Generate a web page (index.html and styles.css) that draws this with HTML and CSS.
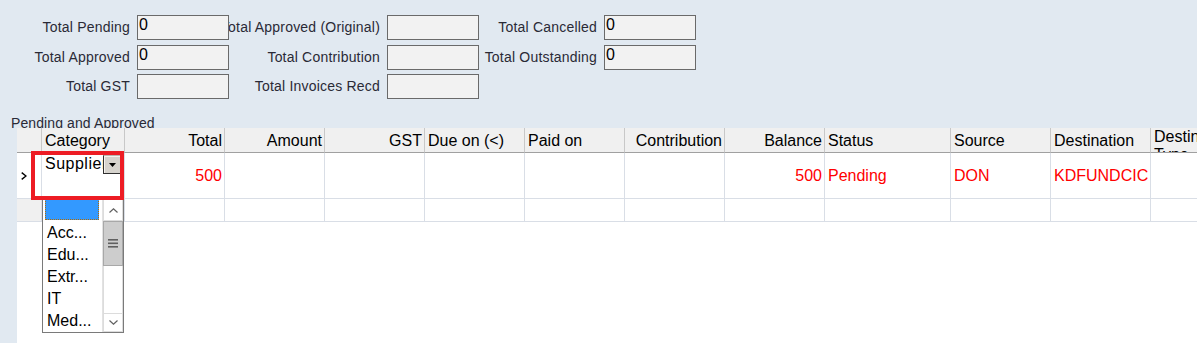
FILE: index.html
```html
<!DOCTYPE html>
<html>
<head>
<meta charset="utf-8">
<link rel="stylesheet" href="styles.css">
</head>
<body>
<div class="page">
  <div class="summary">
    <div class="lbl"><span>Total Pending</span></div><div class="fld">0</div>
    <div class="lbl"><span>Total Approved (Original)</span></div><div class="fld"></div>
    <div class="lbl"><span>Total Cancelled</span></div><div class="fld">0</div>

    <div class="lbl"><span>Total Approved</span></div><div class="fld">0</div>
    <div class="lbl"><span>Total Contribution</span></div><div class="fld"></div>
    <div class="lbl"><span>Total Outstanding</span></div><div class="fld">0</div>

    <div class="lbl"><span>Total GST</span></div><div class="fld"></div>
    <div class="lbl"><span>Total Invoices Recd</span></div><div class="fld"></div>
  </div>

  <div class="caption">Pending and Approved</div>

  <div class="grid">
    <div class="cell hd rh"></div>
    <div class="cell hd left">Category</div>
    <div class="cell hd right">Total</div>
    <div class="cell hd right">Amount</div>
    <div class="cell hd right">GST</div>
    <div class="cell hd left">Due on (&lt;)</div>
    <div class="cell hd left">Paid on</div>
    <div class="cell hd right">Contribution</div>
    <div class="cell hd right">Balance</div>
    <div class="cell hd left">Status</div>
    <div class="cell hd left">Source</div>
    <div class="cell hd left">Destination</div>
    <div class="cell hd left wrap">Destination Type</div>

    <div class="cell rh cur"><svg width="6" height="8" viewBox="0 0 6 8"><polyline points="0.7,0.6 5,4 0.7,7.4" fill="none" stroke="#000" stroke-width="1.4"/></svg></div>
    <div class="cell edit-cell">
      <div class="editor">Supplier</div>
      <div class="ddbtn"><svg width="7" height="4" viewBox="0 0 7 4"><polygon points="0,0 7,0 3.5,4" fill="#000"/></svg></div>
    </div>
    <div class="cell right red">500</div>
    <div class="cell"></div>
    <div class="cell"></div>
    <div class="cell"></div>
    <div class="cell"></div>
    <div class="cell"></div>
    <div class="cell right red">500</div>
    <div class="cell left red">Pending</div>
    <div class="cell left red">DON</div>
    <div class="cell left red">KDFUNDCIC</div>
    <div class="cell"></div>

    <div class="cell rh grey"></div>
    <div class="cell"></div>
    <div class="cell"></div>
    <div class="cell"></div>
    <div class="cell"></div>
    <div class="cell"></div>
    <div class="cell"></div>
    <div class="cell"></div>
    <div class="cell"></div>
    <div class="cell"></div>
    <div class="cell"></div>
    <div class="cell"></div>
    <div class="cell"></div>

    <div class="redbox"></div>

    <div class="droplist">
      <div class="items">
        <div class="item sel"></div>
        <div class="item">Acc...</div>
        <div class="item">Edu...</div>
        <div class="item">Extr...</div>
        <div class="item">IT</div>
        <div class="item">Med...</div>
      </div>
      <div class="sbar">
        <div class="sbtn up"><svg width="9" height="5" viewBox="0 0 9 5"><polyline points="0.5,4.5 4.5,0.8 8.5,4.5" fill="none" stroke="#606060" stroke-width="1.2"/></svg></div>
        <div class="thumb"><svg width="10" height="9" viewBox="0 0 10 9"><rect x="0" y="0" width="10" height="1.6" fill="#606060"/><rect x="0" y="3.5" width="10" height="1.6" fill="#606060"/><rect x="0" y="7" width="10" height="1.6" fill="#606060"/></svg></div>
        <div class="track"></div>
        <div class="sbtn down"><svg width="9" height="5" viewBox="0 0 9 5"><polyline points="0.5,0.5 4.5,4.2 8.5,0.5" fill="none" stroke="#606060" stroke-width="1.2"/></svg></div>
      </div>
    </div>
  </div>
</div>
</body>
</html>
```

FILE: styles.css
```css
html, body {
  margin: 0;
  padding: 0;
}
body {
  background: #e1e9f1;
  font-family: "Liberation Sans", Arial, sans-serif;
  overflow: hidden;
  width: 1197px;
  height: 343px;
}
.page {
  display: flex;
  flex-direction: column;
  height: 343px;
}
.summary {
  display: grid;
  grid-template-columns: 137px 92px 158px 92px 125px 92px;
  grid-auto-rows: 25px;
  row-gap: 4.5px;
  padding-top: 15px;
}
.lbl {
  display: flex;
  justify-content: flex-end;
  align-items: center;
  overflow: hidden;
  padding-right: 7px;
  font-size: 14px;
  letter-spacing: 0.2px;
  color: #2a2a36;
  white-space: nowrap;
}
.lbl span {
  flex: none;
  padding-bottom: 1px;
}
.fld {
  box-sizing: border-box;
  background: #f2f2f2;
  border: 1px solid #6a6a6a;
  font-size: 16px;
  line-height: 18px;
  padding-left: 1px;
  color: #000;
}
.caption {
  margin-top: 14px;
  padding-top: 1.5px;
  height: 13.5px;
  line-height: 16px;
  overflow: hidden;
  padding-left: 11px;
  font-size: 14px;
  letter-spacing: 0.1px;
  color: #2a2a36;
  white-space: nowrap;
}
.grid {
  position: relative;
  flex: 1;
  margin-left: 17px;
  background: #fff;
  display: grid;
  grid-template-columns: 25px 83px repeat(7, 100px) 126px 100px 100px 100px;
  grid-template-rows: 25px 46px 23px;
  align-content: start;
  font-size: 16px;
  color: #000;
}
.cell {
  box-sizing: border-box;
  border-right: 1px solid #d9dee6;
  border-bottom: 1px solid #d9dee6;
  display: flex;
  align-items: center;
  white-space: nowrap;
  overflow: hidden;
  line-height: 18px;
}
.hd {
  background: #f0f0f0;
  border-right-color: #c8c8c8;
  border-bottom-color: #a0a0a0;
  padding-top: 1px;
}
.left { padding-left: 3px; }
.right { justify-content: flex-end; padding-right: 2px; }
.wrap {
  white-space: normal;
  align-items: flex-start;
  line-height: 18px;
  padding-top: 0;
}
.rh { background: #f0f0f0; }
.rh.cur {
  background: #fff;
  padding-left: 4px;
  padding-top: 1px;
}
.red { color: #ff0000; }
.edit-cell {
  position: relative;
  align-items: flex-start;
}
.editor {
  width: 61px;
  overflow: hidden;
  padding-left: 3px;
  padding-top: 2px;
  letter-spacing: 0.5px;
}
.ddbtn {
  position: absolute;
  left: 61px;
  top: 2px;
  width: 19px;
  height: 19px;
  box-sizing: border-box;
  background: #d6d3cd;
  border-left: 1px solid #303030;
  border-bottom: 1px solid #303030;
  border-top: 1px solid #b8b5ae;
  border-right: 1px solid #8a8882;
  box-shadow: inset 1px 1px 0 #f4f2ee;
  display: flex;
  align-items: center;
  justify-content: center;
}
.redbox {
  position: absolute;
  left: 14px;
  top: 23px;
  width: 93px;
  height: 49px;
  box-sizing: border-box;
  border: 4px solid #ed1c24;
  z-index: 3;
}
.droplist {
  position: absolute;
  left: 25px;
  top: 70px;
  width: 82px;
  height: 135px;
  box-sizing: border-box;
  border: 1px solid #7a7a7a;
  background: #fff;
  display: flex;
  z-index: 2;
}
.items {
  width: 60px;
  padding: 0 3px 0 2px;
  box-sizing: border-box;
}
.item {
  height: 22px;
  line-height: 24px;
  padding-left: 2px;
  white-space: nowrap;
  overflow: hidden;
}
.item.sel {
  height: 21px;
  margin-bottom: 1px;
  box-sizing: border-box;
  background: #3399ff;
  border: 1px dotted #b36b00;
}
.sbar {
  width: 20px;
  display: flex;
  flex-direction: column;
  border-left: 1px solid #e2e2e2;
  background: #f0f0f0;
}
.sbtn {
  box-sizing: border-box;
  background: #fff;
  border: 1px solid #dcdcdc;
  display: flex;
  align-items: center;
  justify-content: center;
}
.sbtn.up { height: 22px; }
.sbtn.down { height: 19px; }
.thumb {
  height: 45px;
  box-sizing: border-box;
  background: #cdcdcd;
  border: 1px solid #a8a8a8;
  display: flex;
  align-items: center;
  justify-content: center;
}
.track {
  flex: 1;
  background: #fff;
  border-left: 1px solid #dcdcdc;
  border-right: 1px solid #dcdcdc;
}
```
